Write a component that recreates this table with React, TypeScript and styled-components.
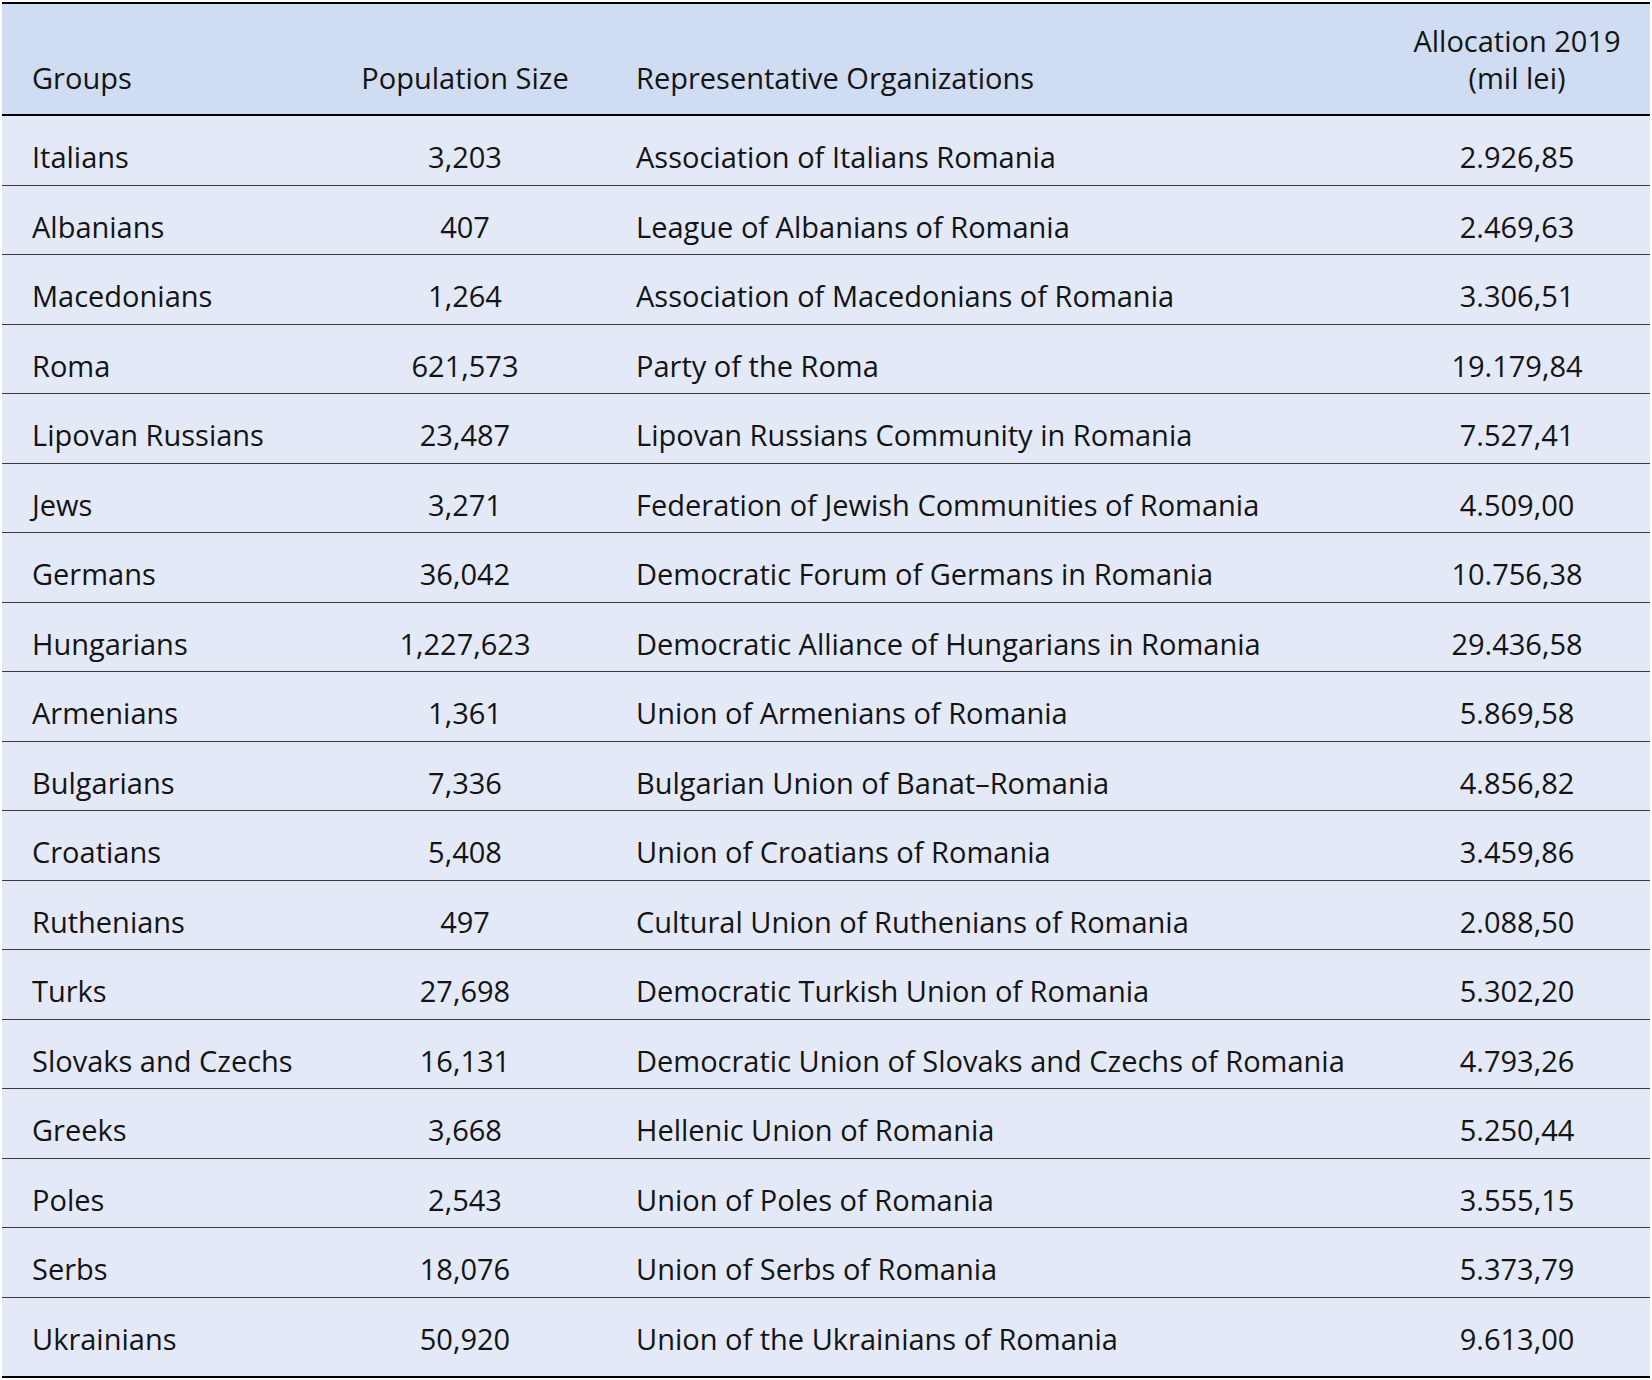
import React from "react";
import styled, { createGlobalStyle } from "styled-components";

const GlobalStyle = createGlobalStyle`
  html, body {
    margin: 0;
    padding: 0;
    background: #ffffff;
  }
  body {
    font-family: "Open Sans", "Noto Sans", "Liberation Sans", sans-serif;
    color: #141414;
  }
`;

const Page = styled.div`
  padding: 2px 2px 0 2px;
`;

const Table = styled.table`
  width: 1648px;
  border-collapse: separate;
  border-spacing: 0;
  table-layout: fixed;
  font-size: 29px;
`;

const HeadCell = styled.th<{ $align: "left" | "center"; $pad: number }>`
  background: #cfdcf1;
  font-weight: 400;
  text-align: ${(p) => p.$align};
  vertical-align: bottom;
  padding: 18px 0 18px ${(p) => p.$pad}px;
  line-height: 37px;
  border-top: 2px solid #000;
  border-bottom: 2px solid #000;
  white-space: nowrap;
`;

const Cell = styled.td<{ $align: "left" | "center"; $pad: number; $last: boolean }>`
  background: #e3e9f6;
  text-align: ${(p) => p.$align};
  vertical-align: top;
  padding: 21px 0 ${(p) => (p.$last ? "17px" : "7.5px")} ${(p) => p.$pad}px;
  line-height: 40px;
  white-space: nowrap;
  border-bottom: ${(p) => (p.$last ? "2.5px solid #000" : "1px solid #3a3a3a")};
`;

type Row = [string, string, string, string];

const rows: Row[] = [
  ["Italians", "3,203", "Association of Italians Romania", "2.926,85"],
  ["Albanians", "407", "League of Albanians of Romania", "2.469,63"],
  ["Macedonians", "1,264", "Association of Macedonians of Romania", "3.306,51"],
  ["Roma", "621,573", "Party of the Roma", "19.179,84"],
  ["Lipovan Russians", "23,487", "Lipovan Russians Community in Romania", "7.527,41"],
  ["Jews", "3,271", "Federation of Jewish Communities of Romania", "4.509,00"],
  ["Germans", "36,042", "Democratic Forum of Germans in Romania", "10.756,38"],
  ["Hungarians", "1,227,623", "Democratic Alliance of Hungarians in Romania", "29.436,58"],
  ["Armenians", "1,361", "Union of Armenians of Romania", "5.869,58"],
  ["Bulgarians", "7,336", "Bulgarian Union of Banat\u2013Romania", "4.856,82"],
  ["Croatians", "5,408", "Union of Croatians of Romania", "3.459,86"],
  ["Ruthenians", "497", "Cultural Union of Ruthenians of Romania", "2.088,50"],
  ["Turks", "27,698", "Democratic Turkish Union of Romania", "5.302,20"],
  ["Slovaks and Czechs", "16,131", "Democratic Union of Slovaks and Czechs of Romania", "4.793,26"],
  ["Greeks", "3,668", "Hellenic Union of Romania", "5.250,44"],
  ["Poles", "2,543", "Union of Poles of Romania", "3.555,15"],
  ["Serbs", "18,076", "Union of Serbs of Romania", "5.373,79"],
  ["Ukrainians", "50,920", "Union of the Ukrainians of Romania", "9.613,00"],
];

const cols: { width: number; align: "left" | "center"; pad: number }[] = [
  { width: 328, align: "left", pad: 30 },
  { width: 270, align: "center", pad: 0 },
  { width: 784, align: "left", pad: 36 },
  { width: 266, align: "center", pad: 0 },
];

export default function App() {
  return (
    <>
      <GlobalStyle />
      <Page>
        <Table>
          <colgroup>
            {cols.map((c, i) => (
              <col key={i} style={{ width: c.width }} />
            ))}
          </colgroup>
          <thead>
            <tr>
              <HeadCell $align="left" $pad={cols[0].pad}>Groups</HeadCell>
              <HeadCell $align="center" $pad={0}>Population Size</HeadCell>
              <HeadCell $align="left" $pad={cols[2].pad}>Representative Organizations</HeadCell>
              <HeadCell $align="center" $pad={0}>
                Allocation 2019
                <br />
                (mil lei)
              </HeadCell>
            </tr>
          </thead>
          <tbody>
            {rows.map((r, i) => (
              <tr key={r[0]}>
                {r.map((v, j) => (
                  <Cell
                    key={j}
                    $align={cols[j].align}
                    $pad={cols[j].pad}
                    $last={i === rows.length - 1}
                  >
                    {v}
                  </Cell>
                ))}
              </tr>
            ))}
          </tbody>
        </Table>
      </Page>
    </>
  );
}
